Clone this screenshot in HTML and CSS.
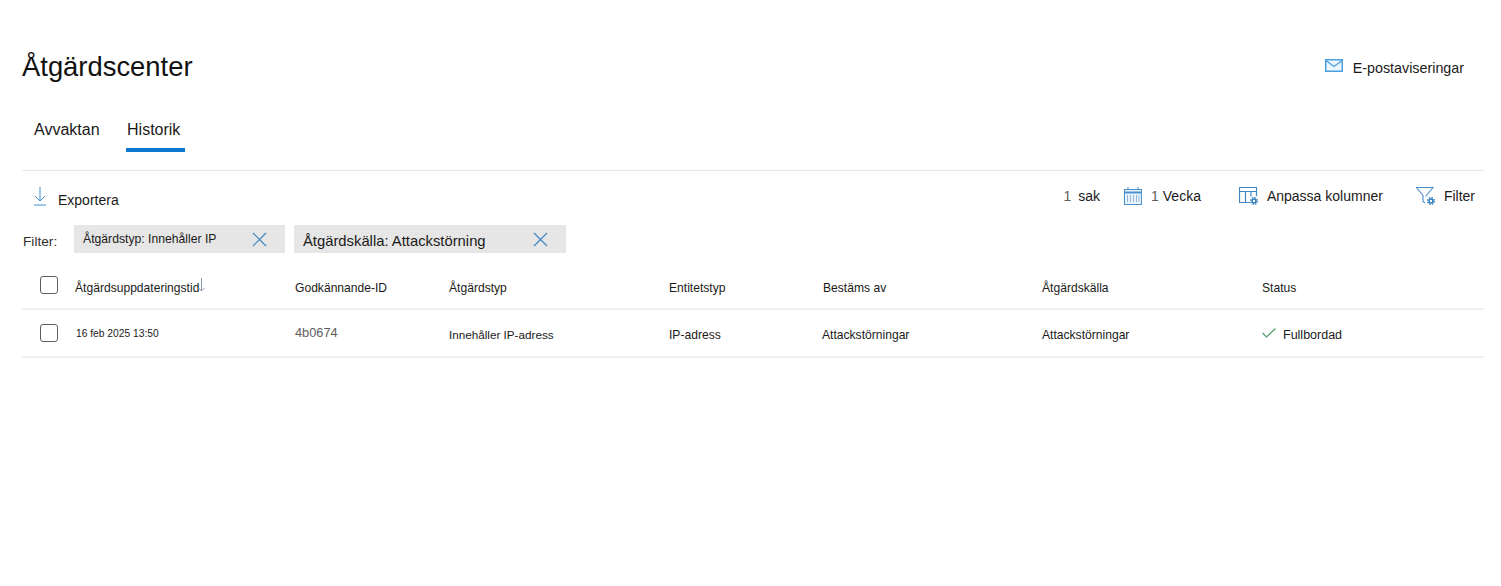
FILE: index.html
```html
<!DOCTYPE html>
<html lang="sv">
<head>
<meta charset="utf-8">
<title>Åtgärdscenter</title>
<link rel="stylesheet" href="styles.css">
</head>
<body>
<main class="page">
  <header class="top">
    <h1 class="title">Åtgärdscenter</h1>
    <button class="mail">
      <svg class="mail-icon" width="18" height="13" viewBox="0 0 18 13"><rect x=".75" y=".75" width="16.5" height="11.5" fill="#eef6fd" stroke="#4a9fe0" stroke-width="1.5"/><path d="M1 1.500l8 6 8-6" fill="none" stroke="#4a9fe0" stroke-width="1.3"/></svg>
      <span class="mail-text">E-postaviseringar</span>
    </button>
  </header>
  <nav class="tabs">
    <a class="tab">Avvaktan</a>
    <a class="tab tab-active">Historik</a>
  </nav>
  <section class="toolbar">
    <div class="export">
      <svg class="export-icon" width="12" height="19" viewBox="0 0 12 19"><path d="M6 0v14M1 9l5 5 5-5M0 18h12" fill="none" stroke="#3f8fd2" stroke-width="1"/></svg>
      <span>Exportera</span>
    </div>
    <div class="actions">
      <span class="count"><b>1</b> sak</span>
      <span class="action week">
        <svg width="18" height="18" viewBox="0 0 18 18"><rect x=".5" y="2.500" width="17" height="15" fill="#eaf3fb" stroke="#4a90cc"/><path d="M.5 5.500h17" stroke="#4a90cc" stroke-width="2"/><path d="M4 0v3M14 0v3" stroke="#4a90cc"/><path d="M3.500 8v7M6.500 8v7M9.500 8v7M12.500 8v7M15 8v7" stroke="#8db9de"/></svg>
        <span><b>1</b> Vecka</span>
      </span>
      <span class="action columns">
        <svg width="19" height="18" viewBox="0 0 19 18"><path d="M11 15.500H.5v-15h17v8.500M.5 4.500h17M6.500 4.500v11M12 4.500v5" fill="none" stroke="#3f86c4" stroke-width="1.200"/><circle cx="15" cy="14" r="2" fill="none" stroke="#2f7ab8" stroke-width="1.500"/><circle cx="15" cy="14" r="3.400" fill="none" stroke="#2f7ab8" stroke-width="1.200" stroke-dasharray="1.500 1.170"/></svg>
        <span>Anpassa kolumner</span>
      </span>
      <span class="action filter">
        <svg width="19" height="18" viewBox="0 0 19 18"><path d="M9.500 9.500L17 .5H.5L7 8.500v6l2 1.500" fill="none" stroke="#4a90cc" stroke-width="1.100"/><circle cx="15" cy="14" r="2" fill="none" stroke="#2f7ab8" stroke-width="1.500"/><circle cx="15" cy="14" r="3.400" fill="none" stroke="#2f7ab8" stroke-width="1.200" stroke-dasharray="1.500 1.170"/></svg>
        <span>Filter</span>
      </span>
    </div>
  </section>
  <section class="filters">
    <span class="filters-label">Filter:</span>
    <span class="chip chip-type">
      <span>Åtgärdstyp: Innehåller IP</span>
      <svg width="15" height="15" viewBox="0 0 15 15"><path d="M1 1l13 13M14 1L1 14" stroke="#3f86c4" stroke-width="1.200"/></svg>
    </span>
    <span class="chip chip-source">
      <span>Åtgärdskälla: Attackstörning</span>
      <svg width="15" height="15" viewBox="0 0 15 15"><path d="M1 1l13 13M14 1L1 14" stroke="#3f86c4" stroke-width="1.200"/></svg>
    </span>
  </section>
  <section class="table">
    <div class="row head">
      <span class="check"></span>
      <span class="sortable">Åtgärdsuppdateringstid<svg class="sort" width="7" height="14" viewBox="0 0 7 14"><path d="M3.500 0v13M.5 10l3 3 3-3" fill="none" stroke="#8a98a8"/></svg></span>
      <span>Godkännande-ID</span>
      <span>Åtgärdstyp</span>
      <span>Entitetstyp</span>
      <span>Bestäms av</span>
      <span>Åtgärdskälla</span>
      <span>Status</span>
    </div>
    <div class="row body">
      <span class="check"></span>
      <span class="date">16 feb 2025 13:50</span>
      <span class="id">4b0674</span>
      <span class="type">Innehåller IP-adress</span>
      <span>IP-adress</span>
      <span class="decided">Attackstörningar</span>
      <span>Attackstörningar</span>
      <span class="status">
        <svg width="14" height="10" viewBox="0 0 14 10"><path d="M.5 5l4 4 9-8.500" fill="none" stroke="#4f9d69" stroke-width="1.200"/></svg>
        Fullbordad
      </span>
    </div>
  </section>
</main>
</body>
</html>
```

FILE: styles.css
```css
* { box-sizing: border-box; }
html, body { margin: 0; padding: 0; background: #fff; }
body { font-family: "Liberation Sans", Arial, sans-serif; color: #1b1a19; font-size: 12px; }
.page { width: 1462px; margin-left: 22px; padding-top: 48px; }

.top { display: flex; justify-content: space-between; align-items: center; height: 38px; }
.title { margin: 0; font-size: 27.400px; font-weight: 400; line-height: 38px; color: #111; }
.mail { display: flex; align-items: center; gap: 10px; border: 0; background: none; padding: 0; margin-right: 20px; font: inherit; font-size: 14.300px; color: #1b1a19; }
.mail-icon { margin-top: -4px; }
.mail-text { padding-top: 2px; }

.tabs { display: flex; margin-top: 33px; padding-left: 12px; gap: 27.500px; height: 52px; border-bottom: 1px solid #e8e8e8; align-items: flex-start; }
.tab { font-size: 16px; line-height: 20px; padding-top: 1px; color: #1b1a19; height: 33px; }
.tab-active { position: relative; }
.tab-active::after { content: ""; position: absolute; left: -1.500px; right: -4.500px; bottom: 0; height: 4px; background: #0f78d0; }

.toolbar { display: flex; justify-content: space-between; align-items: flex-start; height: 54px; }
.export { display: flex; align-items: center; gap: 12px; margin: 21px 0 0 12px; font-size: 14px; }
.export-icon { margin-top: -7px; }
.actions { display: flex; align-items: center; margin: 16px 9px 0 0; font-size: 14px; }
.actions b { font-weight: 400; color: #605e5c; }
.action { display: flex; align-items: center; gap: 9px; }
.count b { margin-right: 3px; }
.week { margin-left: 24px; }
.columns { margin-left: 38px; }
.filter { margin-left: 33px; }

.filters { display: flex; align-items: center; height: 28px; }
.filters-label { width: 52px; padding: 4px 0 0 1px; font-size: 13.700px; color: #323130; }
.chip { display: flex; align-items: center; justify-content: space-between; height: 28px; background: #e6e6e6; }
.chip-type { width: 211px; padding: 0 18px 0 9px; font-size: 12.200px; }
.chip-source { width: 272px; margin-left: 9px; padding: 0 18px 0 9px; font-size: 14.800px; }
.chip-source span { padding-top: 4px; }

.table { margin-top: 13px; }
.row { display: grid; grid-template-columns: 53px 220px 154px 220px 154px 219px 220px 1fr; align-items: center; border-bottom: 2px solid #f0f0f0; font-size: 12.100px; }
.head { height: 44px; padding-top: 2px; }
.body { height: 48px; padding-top: 4px; }
.check { width: 18px; height: 18px; margin-left: 18px; border: 1px solid #605e5c; border-radius: 3px; }
.head .check { margin-top: -6px; }
.body .check { margin-top: -4px; }
.sortable { position: relative; }
.sort { position: absolute; left: 123px; top: -3px; }
.date { font-size: 10.250px; padding-left: 1px; margin-top: -4px; }
.id { font-size: 12.800px; color: #605e5c; margin-top: -6px; }
.type { font-size: 11.700px; margin-top: -2px; }
.decided { margin-left: -1px; }
.status { display: flex; align-items: center; gap: 7px; font-size: 12.500px; }
.status svg { margin-top: -4px; }
```
